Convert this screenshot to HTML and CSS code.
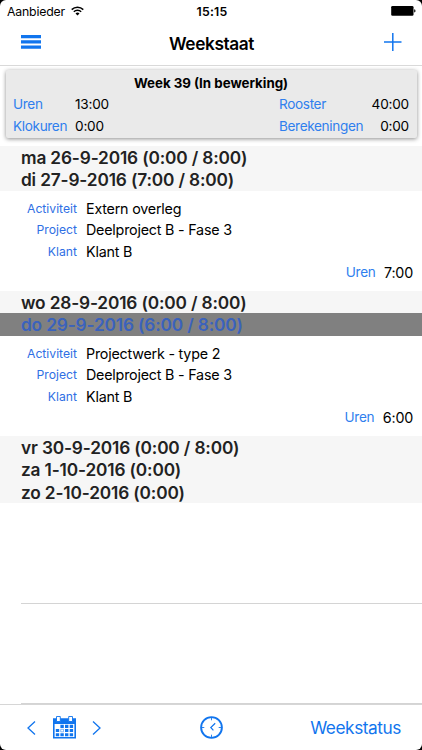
FILE: index.html
```html
<!DOCTYPE html>
<html lang="nl">
  <head>
    <meta charset="utf-8">
    <title>Weekstaat</title>
    <link rel="stylesheet" href="styles.css">
  </head>
  <body>
    <div class="screen">
      <div class="status-bar">
        <div class="carrier">
          <span class="carrier-name">Aanbieder</span>
          <svg width="13" height="10" viewBox="0 0 13 10" fill="none" stroke="#000" stroke-width="1.5">
            <path d="M.7 3.6a8.3 8.3 0 0 1 11.6 0M2.8 5.8a5.3 5.3 0 0 1 7.4 0"/>
            <path d="M4.5 7.4a2.9 2.9 0 0 1 4 0l-2 2.1z" fill="#000" stroke="none"/>
          </svg>
        </div>
        <span class="clock">15:15</span>
        <svg class="battery" width="26" height="10" viewBox="0 0 26 10">
          <rect x="1.2" y="0" width="22.3" height="9.8" rx="1.3"/>
          <path d="M24.2 3.2q1.3.3 1.3 1.7t-1.3 1.7z"/>
        </svg>
      </div>

      <div class="nav-bar">
        <svg class="menu" width="20" height="14" viewBox="0 0 20 14" fill="#1175ee">
          <path d="M0 0h20v3.2H0zM0 5.3h20v3.2H0zM0 10.6h20v3.2H0z"/>
        </svg>
        <h1>Weekstaat</h1>
        <svg class="add" width="18" height="18" viewBox="0 0 18 18" stroke="#1175ee" stroke-width="1.5">
          <path d="M0 9h17.5M8.8 0v18"/>
        </svg>
      </div>

      <div class="content">
        <div class="summary">
          <h2>Week 39 (In bewerking)</h2>
          <div class="summary-row">
            <span class="label">Uren</span>
            <span>13:00</span>
            <span class="label">Rooster</span>
            <span class="end">40:00</span>
          </div>
          <div class="summary-row">
            <span class="label">Klokuren</span>
            <span>0:00</span>
            <span class="label">Berekeningen</span>
            <span class="end">0:00</span>
          </div>
        </div>

        <div class="day">ma 26-9-2016 (0:00 / 8:00)</div>
        <div class="day">di 27-9-2016 (7:00 / 8:00)</div>
        <div class="entry">
          <div class="field"><span class="name">Activiteit</span><span>Extern overleg</span></div>
          <div class="field"><span class="name">Project</span><span>Deelproject B - Fase 3</span></div>
          <div class="field"><span class="name">Klant</span><span>Klant B</span></div>
          <div class="hours"><span class="label">Uren</span><span>7:00</span></div>
        </div>
        <div class="day">wo 28-9-2016 (0:00 / 8:00)</div>
        <div class="day selected">do 29-9-2016 (6:00 / 8:00)</div>
        <div class="entry">
          <div class="field"><span class="name">Activiteit</span><span>Projectwerk - type 2</span></div>
          <div class="field"><span class="name">Project</span><span>Deelproject B - Fase 3</span></div>
          <div class="field"><span class="name">Klant</span><span>Klant B</span></div>
          <div class="hours"><span class="label">Uren</span><span>6:00</span></div>
        </div>
        <div class="day">vr 30-9-2016 (0:00 / 8:00)</div>
        <div class="day">za 1-10-2016 (0:00)</div>
        <div class="day">zo 2-10-2016 (0:00)</div>
        <div class="empty-row"></div>
        <div class="empty-row"></div>
      </div>

      <div class="toolbar">
        <div class="week-picker">
          <svg width="9" height="14" viewBox="0 0 9 14" fill="none" stroke="#1175ee" stroke-width="1.3">
            <path d="M8 .6L1 7l7 6.4"/>
          </svg>
          <svg width="23" height="23" viewBox="0 0 23 23" fill="#1175ee">
            <path d="M0 2.2h23v20.3H0z"/>
            <path d="M1.6 8.1h19.8v12.8H1.6z" fill="#fff"/>
            <path d="M3.5 .5h3.8v5h-3.8zM15.7 .5h3.8v5h-3.8z" stroke="#1175ee" stroke-width=".9" fill="#fff"/>
            <path d="M7.4 8.8h3.4v3.1H7.4zM12 8.8h3.4v3.1H12zM16.7 8.8h3.4v3.1h-3.4zM2.8 13h3.4v3.1H2.8zM12 13h3.4v3.1H12zM16.7 13h3.4v3.1h-3.4zM2.8 17.2h3.4v3.1H2.8zM7.4 17.2h3.4v3.1H7.4zM12 17.2h3.4v3.1H12zM16.7 17.2h3.4v3.1h-3.4z"/>
            <path d="M7.7 13.3h2.8v2.5H7.7z" fill="#fff" stroke="#1175ee" stroke-width=".5"/>
          </svg>
          <svg width="9" height="14" viewBox="0 0 9 14" fill="none" stroke="#1175ee" stroke-width="1.3">
            <path d="M1 .6L8 7l-7 6.4"/>
          </svg>
        </div>
        <svg class="clock-icon" width="23" height="23" viewBox="0 0 23 23" fill="none" stroke="#1175ee">
          <circle cx="11.5" cy="11.5" r="10.4" stroke-width="1.9"/>
          <path d="M11.5 2v2.3M11.5 18.7V21M2 11.5h2.3M18.7 11.5H21" stroke-width=".9"/>
          <path d="M15.2 7.3l-4.4 4.2 2.6 2.8" stroke-width="1.2"/>
        </svg>
        <span class="week-status">Weekstatus</span>
      </div>
    </div>
  </body>
</html>
```
FILE: styles.css
```css
body {
  margin: 0;
  background-color: #000000;
  font-family: Inter, sans-serif;
  color: #000000;
}
svg {
  display: block;
}
.screen {
  display: flex;
  flex-direction: column;
  width: 422px;
  height: 750px;
  background-color: #ffffff;
  border-radius: 6px;
  overflow: hidden;
}

.status-bar {
  display: grid;
  grid-template-columns: 1fr auto 1fr;
  align-items: center;
  height: 22px;
  padding: 0 6px 0 7px;
  font-size: 12.3px;
}
.carrier {
  display: flex;
  align-items: center;
  gap: 6px;
}
.carrier-name {
  letter-spacing: -0.2px;
}
.clock {
  padding-left: 1px;
  font-weight: 600;
  letter-spacing: 0.2px;
}
.battery {
  justify-self: end;
}

.nav-bar {
  display: flex;
  align-items: center;
  justify-content: space-between;
  height: 43px;
  padding: 0 20px 0 21px;
  border-bottom: 1px solid #d9d9d9;
}
.menu,
.add {
  margin-bottom: 3px;
}
.nav-bar h1 {
  margin: 0 2px 1px 0;
  font-size: 17.3px;
  font-weight: 600;
  letter-spacing: -0.4px;
}

.content {
  flex: 1;
  overflow: hidden;
}
.summary {
  height: 68px;
  margin: 4px 5px 8px 6px;
  padding: 0 8px 0 7px;
  box-sizing: border-box;
  background-color: #eaeaea;
  border-radius: 2px;
  box-shadow: 0 1px 4px rgba(0,0,0,0.45);
  font-size: 13.6px;
}
.summary h2 {
  margin: 0;
  padding-top: 2px;
  line-height: 22px;
  text-align: center;
  font-size: 13.3px;
  font-weight: 700;
}
.summary-row {
  display: grid;
  grid-template-columns: 62px 1fr 85px 45px;
  line-height: 21.5px;
  letter-spacing: -0.2px;
}
.label {
  color: #2f7fee;
}
.summary .label {
  letter-spacing: -0.35px;
}
.end {
  text-align: right;
}

.day {
  height: 22.4px;
  padding-left: 21px;
  background-color: #f6f6f6;
  color: #222222;
  line-height: 24px;
  font-size: 17.3px;
  font-weight: 600;
  letter-spacing: -0.16px;
}
.day.selected {
  background-color: #808080;
  color: #3a62bd;
}

.entry {
  height: 100.2px;
  padding: 7px 9px 0 0;
  box-sizing: border-box;
  font-size: 14.3px;
  letter-spacing: -0.21px;
}
.field {
  display: flex;
  gap: 9px;
  line-height: 21.5px;
}
.name {
  width: 77px;
  text-align: right;
  color: #2f6fe4;
  font-size: 12.2px;
  letter-spacing: 0;
}
.hours {
  display: flex;
  justify-content: flex-end;
  gap: 8.5px;
  line-height: 21.5px;
}
.hours .label {
  font-size: 13.6px;
  letter-spacing: -0.3px;
}

.empty-row {
  height: 100.4px;
  margin-left: 21px;
  box-sizing: border-box;
  border-bottom: 1px solid #d4d4d4;
}

.toolbar {
  display: grid;
  grid-template-columns: 1fr auto 1fr;
  align-items: center;
  height: 45px;
  padding: 0 21px;
  border-top: 1px solid #d6d6d6;
  color: #1175ee;
}
.week-picker {
  display: flex;
  align-items: center;
  gap: 16.5px;
  padding-left: 6px;
}
.week-status {
  justify-self: end;
  font-size: 17.3px;
  letter-spacing: -0.45px;
}
```
